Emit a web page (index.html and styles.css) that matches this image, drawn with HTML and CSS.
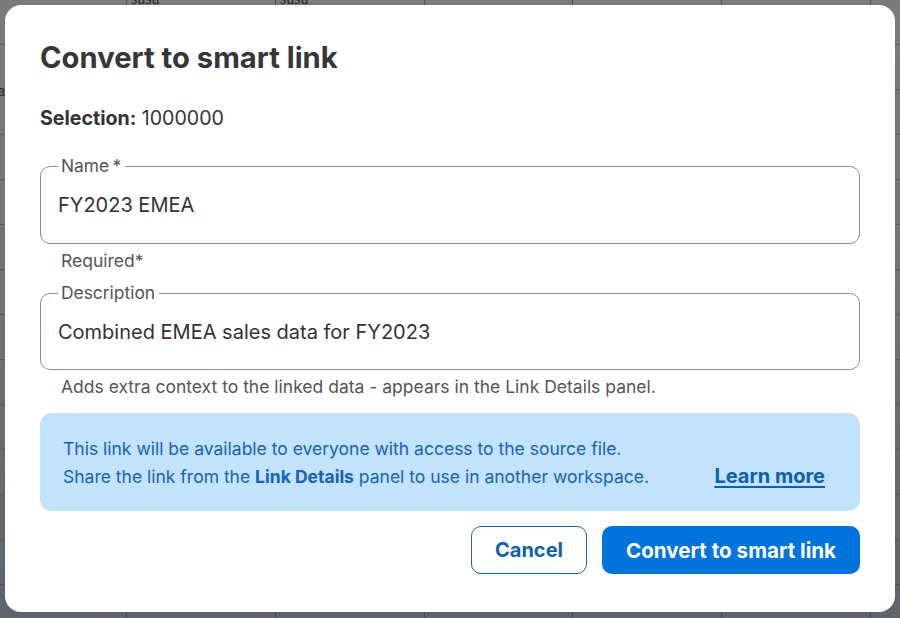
FILE: index.html
```html
<!DOCTYPE html>
<html lang="en">
<head>
<meta charset="utf-8">
<title>Convert to smart link</title>
<link rel="stylesheet" href="styles.css">
</head>
<body>
<div class="sheet">
  <span class="cell-text c1">susu</span>
  <span class="cell-text c2">susu</span>
  <span class="cell-text c3">a</span>
</div>
<div class="dialog" role="dialog" aria-labelledby="dlg-title">
  <h1 id="dlg-title" class="title">Convert to smart link</h1>
  <p class="selection"><strong>Selection:</strong> 1000000</p>

  <fieldset class="field field-first">
    <legend class="field-label">Name&#8201;*</legend>
    <div class="field-value">FY2023 EMEA</div>
  </fieldset>
  <p class="helper">Required*</p>

  <fieldset class="field field-next">
    <legend class="field-label">Description</legend>
    <div class="field-value">Combined EMEA sales data for FY2023</div>
  </fieldset>
  <p class="helper">Adds extra context to the linked data - appears in the Link Details panel.</p>

  <div class="info">
    <div class="info-text">
      <p>This link will be available to everyone with access to the source file.</p>
      <p>Share the link from the <strong>Link Details</strong> panel to use in another workspace.</p>
    </div>
    <a class="learn" href="#">Learn more</a>
  </div>

  <div class="actions">
    <button class="btn btn-secondary" type="button">Cancel</button>
    <button class="btn btn-primary" type="button">Convert to smart link</button>
  </div>
</div>
</body>
</html>
```

FILE: styles.css
```css
html, body {
  margin: 0;
  padding: 0;
}

body {
  width: 900px;
  height: 618px;
  overflow: hidden;
  font-family: "Inter", "Liberation Sans", sans-serif;
  background-color: #6e7174;
  background-image: linear-gradient(to bottom, #7b7b7b 0%, #707274 50%, #5e646a 100%);
  position: relative;
}

.sheet {
  position: absolute;
  inset: 0;
  background-image:
    linear-gradient(to right, transparent 126px, rgba(40,40,40,0.5) 126px, rgba(40,40,40,0.5) 127px, transparent 127px),
    linear-gradient(to right, transparent 275px, rgba(40,40,40,0.5) 275px, rgba(40,40,40,0.5) 276px, transparent 276px),
    linear-gradient(to right, transparent 424px, rgba(40,40,40,0.5) 424px, rgba(40,40,40,0.5) 425px, transparent 425px),
    linear-gradient(to right, transparent 572px, rgba(40,40,40,0.5) 572px, rgba(40,40,40,0.5) 573px, transparent 573px),
    linear-gradient(to right, transparent 721px, rgba(40,40,40,0.5) 721px, rgba(40,40,40,0.5) 722px, transparent 722px),
    linear-gradient(to right, transparent 870px, rgba(40,40,40,0.5) 870px, rgba(40,40,40,0.5) 871px, transparent 871px),
    repeating-linear-gradient(to bottom, transparent 0, transparent 44px, rgba(40,40,40,0.35) 44px, rgba(40,40,40,0.35) 45px);
}

.cell-text {
  position: absolute;
  font-family: "Liberation Serif", serif;
  font-size: 16px;
  color: #2a2a2a;
}
.c1 { left: 131px; top: -10px; }
.c2 { left: 280px; top: -10px; }
.c3 { left: -2px; top: 82px; }

.dialog {
  position: absolute;
  left: 5px;
  top: 5px;
  width: 890px;
  height: 607px;
  box-sizing: border-box;
  background: #ffffff;
  border-radius: 16px;
  padding: 36px 35px 0 35px;
  color: #333333;
}

.title {
  margin: 0;
  font-size: 29.2px;
  line-height: 34px;
  font-weight: 700;
  color: #363636;
}

.selection {
  margin: 31px 0 0 0;
  font-size: 19.6px;
  line-height: 24px;
  color: #333333;
}
.selection strong {
  font-weight: 700;
}

.field {
  padding: 0 17px;
  border: 1px solid #8f8f8f;
  border-radius: 10px;
  height: 88px;
  box-sizing: border-box;
  min-width: 0;
}
.field-first {
  margin: 26px 0 0 0;
}
.field-next {
  margin: 11px 0 0 0;
  height: 87px;
}

.field-label {
  padding: 0 4px 0 3px;
  font-size: 17.4px;
  line-height: 20px;
  color: #555555;
}

.field-value {
  font-size: 20px;
  line-height: 26px;
  color: #333333;
  margin-top: 16px;
}

.helper {
  margin: 6px 0 0 21px;
  font-size: 17.5px;
  line-height: 22px;
  color: #555555;
}

.info {
  margin-top: 15px;
  background: #c3e2fc;
  border-radius: 12px;
  height: 98px;
  box-sizing: border-box;
  padding: 2px 35px 0 23px;
  display: flex;
  align-items: center;
  justify-content: space-between;
  color: #1662b4;
}

.info-text p {
  margin: 0;
  font-size: 17.5px;
  line-height: 28px;
}
.info-text strong {
  font-weight: 700;
}

.learn {
  font-size: 20px;
  font-weight: 700;
  color: #0d5fb0;
  text-decoration: underline;
  text-underline-offset: 3px;
  text-decoration-thickness: 2px;
  margin-top: 26px;
}

.actions {
  margin-top: 15px;
  display: flex;
  justify-content: flex-end;
  gap: 15px;
}

.btn {
  height: 48px;
  border-radius: 10px;
  font-family: inherit;
  font-size: 20px;
  font-weight: 700;
  padding: 0 20px;
  cursor: pointer;
}

.btn-secondary {
  width: 116px;
  background: #ffffff;
  border: 1.5px solid #1867b8;
  color: #135fae;
}

.btn-primary {
  width: 258px;
  font-size: 20.6px;
  background: #0074db;
  border: none;
  color: #ffffff;
}
```
